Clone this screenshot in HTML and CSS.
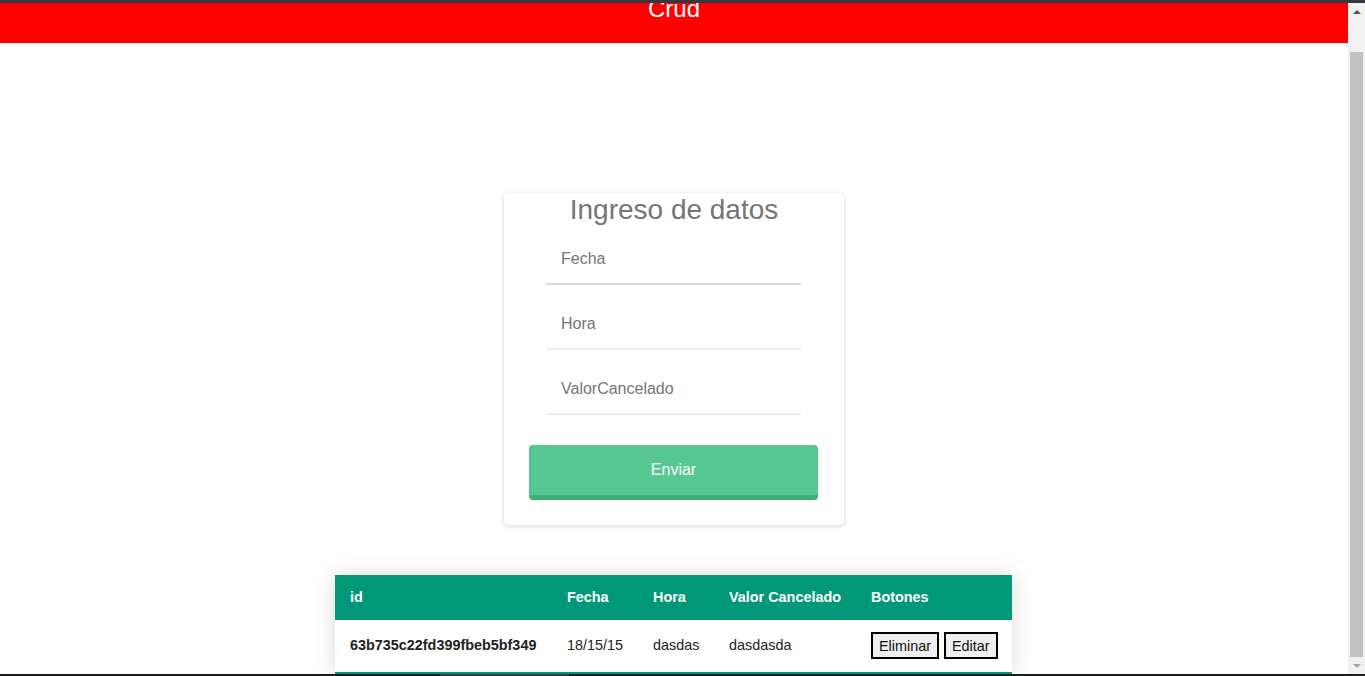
FILE: index.html
```html
<!DOCTYPE html>
<html lang="es">
<head>
<meta charset="utf-8">
<title>Crud</title>
<link rel="stylesheet" href="styles.css">
</head>
<body>
<div class="frame-top"></div>
<div class="viewport">
  <div class="page">
    <header class="topbar"><h1>Crud</h1></header>
    <form class="card">
      <h2 class="card-title">Ingreso de datos</h2>
      <input class="field field-first" type="text" placeholder="Fecha">
      <input class="field" type="text" placeholder="Hora">
      <input class="field" type="text" placeholder="ValorCancelado">
      <button class="submit" type="button">Enviar</button>
    </form>
    <table class="styled-table">
      <colgroup>
        <col class="c-id"><col class="c-fecha"><col class="c-hora"><col class="c-valor"><col class="c-btn">
      </colgroup>
      <thead>
        <tr><th>id</th><th>Fecha</th><th>Hora</th><th>Valor Cancelado</th><th>Botones</th></tr>
      </thead>
      <tbody>
        <tr>
          <td class="id-cell">63b735c22fd399fbeb5bf349</td>
          <td>18/15/15</td>
          <td>dasdas</td>
          <td>dasdasda</td>
          <td><button class="row-btn" type="button">Eliminar</button><button class="row-btn" type="button">Editar</button></td>
        </tr>
      </tbody>
    </table>
  </div>
  <div class="scrollbar">
    <div class="sb-arrow"><span class="tri-up"></span></div>
    <div class="sb-gap"></div>
    <div class="sb-thumb"></div>
    <div class="sb-arrow"><span class="tri-down"></span></div>
  </div>
</div>
<div class="frame-bottom"><span class="fb-a"></span><span class="fb-b"></span></div>
</body>
</html>
```
FILE: styles.css
```css
html, body {
  margin: 0;
  padding: 0;
}
body {
  height: 676px;
  overflow: hidden;
  display: flex;
  flex-direction: column;
  font-family: "Liberation Sans", Arial, sans-serif;
  background: #fff;
}
.frame-top {
  height: 3px;
  background: #33373f;
  flex: none;
}
.viewport {
  flex: 1;
  min-height: 0;
  display: flex;
}
.page {
  flex: 1;
  overflow: hidden;
  display: flex;
  flex-direction: column;
  align-items: center;
}
.topbar {
  align-self: stretch;
  height: 40px;
  background: #ff0000;
  overflow: hidden;
  text-align: center;
  flex: none;
}
.topbar h1 {
  margin: -8px 0 0;
  font-size: 24px;
  line-height: 28px;
  font-weight: normal;
  color: #fff;
}
.card {
  margin: 150px 0 0;
  width: 340px;
  box-sizing: border-box;
  padding: 1px 25px 25px;
  background: #fff;
  border-radius: 4px;
  box-shadow: 0 1px 4px rgba(0, 0, 0, 0.18);
  display: flex;
  flex-direction: column;
  align-items: center;
  flex: none;
}
.card-title {
  margin: 0 0 9px;
  font-size: 28px;
  line-height: 32px;
  font-weight: normal;
  color: #757575;
}
.field {
  width: 255px;
  box-sizing: border-box;
  padding: 15px 15px;
  margin: 0 1px 15px 0;
  border: 0;
  border-bottom: 2px solid #eeeeee;
  font-family: inherit;
  font-size: 16px;
  line-height: 18px;
  height: 50px;
  color: #333;
  background: transparent;
  outline: none;
}
.field-first {
  border-bottom-color: #dadada;
}
.field::placeholder {
  color: #757575;
  opacity: 1;
}
.submit {
  margin: 15px 1px 0 0;
  width: 289px;
  height: 55px;
  box-sizing: border-box;
  border: 0;
  border-bottom: 5px solid #3daf73;
  border-radius: 4px;
  background: #57c792;
  color: #fff;
  font-family: inherit;
  font-size: 16px;
  padding: 0;
}
.styled-table {
  margin: 50px 1px 0 0;
  width: 677px;
  table-layout: fixed;
  border-collapse: collapse;
  font-size: 14.4px;
  box-shadow: 0 0 20px rgba(0, 0, 0, 0.15);
  flex: none;
}
.c-id { width: 217px; }
.c-fecha { width: 86px; }
.c-hora { width: 76px; }
.c-valor { width: 142px; }
.c-btn { width: 156px; }
.styled-table th {
  background: #009879;
  color: #fff;
  text-align: left;
  font-weight: bold;
  padding: 14px 15px;
  line-height: 17px;
  white-space: nowrap;
}
.styled-table td {
  padding: 12px 15px 13px;
  line-height: 17px;
  color: #222;
  white-space: nowrap;
  vertical-align: middle;
}
.styled-table tbody tr {
  border-bottom: 2px solid #009879;
}
.id-cell {
  font-weight: bold;
}
.row-btn {
  height: 27px;
  box-sizing: border-box;
  padding: 0 6px;
  margin: 0 5px 0 0;
  border: 2px solid #000;
  background: #efefef;
  color: #111;
  font-family: inherit;
  font-size: 14.4px;
  vertical-align: middle;
}
.scrollbar {
  width: 17px;
  flex: none;
  background: #f1f1f1;
  display: flex;
  flex-direction: column;
}
.sb-arrow {
  height: 17px;
  flex: none;
  display: flex;
  align-items: center;
  justify-content: center;
}
.tri-up {
  width: 0;
  height: 0;
  border-left: 4px solid transparent;
  border-right: 4px solid transparent;
  border-bottom: 4px solid #505050;
}
.tri-down {
  width: 0;
  height: 0;
  border-left: 4px solid transparent;
  border-right: 4px solid transparent;
  border-top: 4px solid #a3a3a3;
}
.sb-gap {
  height: 32px;
  flex: none;
}
.sb-thumb {
  flex: 1;
  margin: 0 2px;
  background: #c1c1c1;
}
.frame-bottom {
  height: 2px;
  flex: none;
  background: #1b1b1b;
  display: flex;
}
.fb-a {
  width: 440px;
}
.fb-b {
  width: 129px;
  background: #3c3c3c;
}
```
